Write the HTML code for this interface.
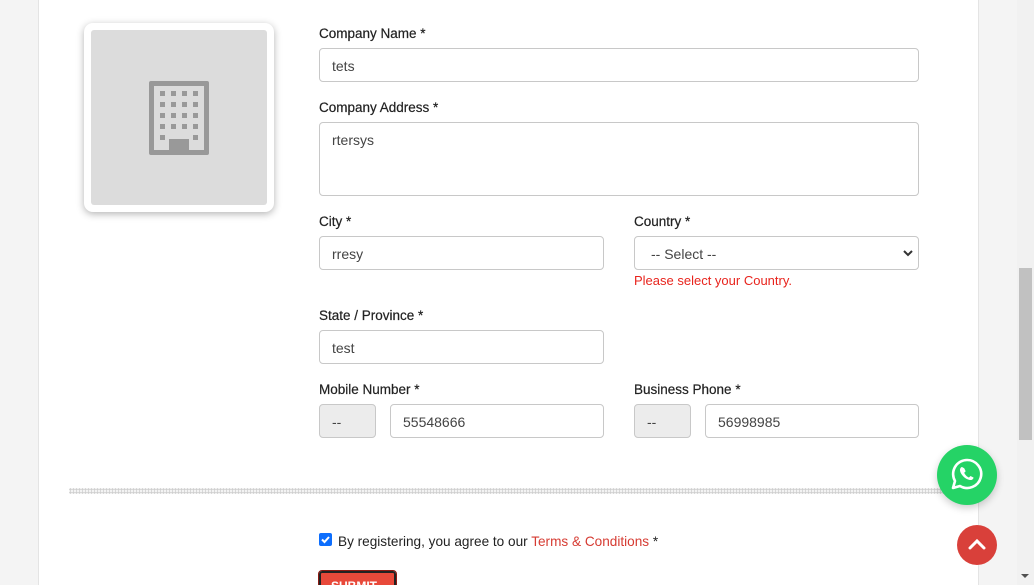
<!DOCTYPE html>
<html><head><meta charset="utf-8"><style>
*{box-sizing:border-box;margin:0;padding:0}
html,body{width:1034px;height:585px;overflow:hidden}
body{background:#f4f4f4;font-family:"Liberation Sans",sans-serif;color:#222;position:relative}
.card{position:absolute;left:38px;top:0;width:941px;height:585px;background:#fff;border-left:1px solid #e4e4e4;border-right:1px solid #e4e4e4}
.sb{position:absolute;left:1017px;top:0;width:17px;height:585px;background:#f1f1f1}
.thumb{position:absolute;left:1019px;top:268px;width:13px;height:172px;background:#c1c1c1}
.arr{position:absolute;left:1021px;top:574px;width:0;height:0;border-left:4px solid transparent;border-right:4px solid transparent;border-top:4px solid #505050}
.logo{position:absolute;left:84px;top:23px;width:190px;height:189px;background:#fff;border-radius:9px;box-shadow:0 2px 8px rgba(0,0,0,.3);padding:7px}
.logo .in{width:100%;height:100%;background:#dcdcdc;border-radius:3px;position:relative}
.a{position:absolute}
label{position:absolute;font-size:13.5px;color:#222;-webkit-text-stroke:.2px #222}
.f{position:absolute;border:1px solid #c8c8c8;border-radius:4px;background:#fff;font-size:14px;color:#444;padding:0 12px;line-height:34px}
.g{background:#ececec}
.err{position:absolute;color:#e8241d;font-size:13px}
</style></head><body>
<div class="card"></div>
<div class="sb"></div><div class="thumb"></div><div class="arr"></div>
<div class="logo"><div class="in">
<svg class="a" style="left:58px;top:50px" width="60" height="76" viewBox="0 0 60 76">
<path d="M2 1h56a2 2 0 0 1 2 2v70a2 2 0 0 1-2 2H2a2 2 0 0 1-2-2V3a2 2 0 0 1 2-2zM5 6v64h15v-11h20v11h15V6z" fill="#999" fill-rule="evenodd"/>
<g fill="#999">
<rect x="11" y="11" width="5" height="5"/><rect x="22" y="11" width="5" height="5"/><rect x="33" y="11" width="5" height="5"/><rect x="44" y="11" width="5" height="5"/>
<rect x="11" y="22" width="5" height="5"/><rect x="22" y="22" width="5" height="5"/><rect x="33" y="22" width="5" height="5"/><rect x="44" y="22" width="5" height="5"/>
<rect x="11" y="33" width="5" height="5"/><rect x="22" y="33" width="5" height="5"/><rect x="33" y="33" width="5" height="5"/><rect x="44" y="33" width="5" height="5"/>
<rect x="11" y="44" width="5" height="5"/><rect x="22" y="44" width="5" height="5"/><rect x="33" y="44" width="5" height="5"/><rect x="44" y="44" width="5" height="5"/>
<rect x="11" y="55" width="5" height="5"/><rect x="44" y="55" width="5" height="5"/></g></svg>
</div></div>

<label style="left:319px;top:26px">Company Name *</label>
<div class="f" style="left:319px;top:48px;width:600px;height:34px">tets</div>
<label style="left:319px;top:100px">Company Address *</label>
<div class="f" style="left:319px;top:122px;width:600px;height:74px;line-height:34px">rtersys</div>
<label style="left:319px;top:214px">City *</label>
<div class="f" style="left:319px;top:236px;width:285px;height:34px">rresy</div>
<label style="left:634px;top:214px">Country *</label>
<div class="f" style="left:634px;top:236px;width:285px;height:34px;padding-left:16px">-- Select --
<svg class="a" style="right:5px;top:12px" width="10" height="8" viewBox="0 0 10 8"><path d="M1 2l4 4 4-4" stroke="#333" stroke-width="2" fill="none"/></svg></div>
<div class="err" style="left:634px;top:273px">Please select your Country.</div>
<label style="left:319px;top:308px">State / Province *</label>
<div class="f" style="left:319px;top:330px;width:285px;height:34px">test</div>
<label style="left:319px;top:382px">Mobile Number *</label>
<div class="f g" style="left:319px;top:404px;width:57px;height:34px">--</div>
<div class="f" style="left:390px;top:404px;width:214px;height:34px">55548666</div>
<label style="left:634px;top:382px">Business Phone *</label>
<div class="f g" style="left:634px;top:404px;width:57px;height:34px">--</div>
<div class="f" style="left:705px;top:404px;width:214px;height:34px">56998985</div>

<div class="a" style="left:69px;top:488px;width:880px;height:6px;background-image:radial-gradient(circle,#cfcfcf 1.2px,transparent 1.4px);background-size:3px 3px"></div>

<div class="a" style="left:319px;top:533px;width:13px;height:13px;background:#0d6efd;border-radius:2px">
<svg class="a" style="left:1px;top:1px" width="11" height="11" viewBox="0 0 11 11"><path d="M2 5.5l2.5 2.5 4.5-5" stroke="#fff" stroke-width="2" fill="none"/></svg></div>
<div class="a" style="left:338px;top:534px;font-size:13.6px;color:#222">By registering, you agree to our <span style="color:#d63b32">Terms &amp; Conditions</span> *</div>

<div class="a" style="left:319px;top:571px;width:77px;height:20px;background:#e8493a;border:2px solid #222;outline:1px solid #8b1a12;border-radius:3px;color:#fff;font-size:12px;font-weight:bold;padding:6px 10px">SUBMIT</div>

<div class="a" style="left:937px;top:445px;width:60px;height:60px;border-radius:50%;background:#25d366;box-shadow:0 3px 8px rgba(0,0,0,.2)">
<svg class="a" style="left:13px;top:12px" width="34" height="34" viewBox="0 0 34 34">
<path d="M17 3a14 14 0 0 0-12 21l-2 7 7-2A14 14 0 1 0 17 3z" fill="none" stroke="#fff" stroke-width="2.6" stroke-linejoin="round"/>
<path d="M12 10c-1 0-2 1.5-2 3 0 3 4 9 10 10 2 .3 3.5-1 3.5-2.5l-3-1.5-1.5 1.5c-2-.8-4-2.8-4.8-4.8l1.5-1.5-1.5-3z" fill="#fff"/></svg></div>

<div class="a" style="left:957px;top:525px;width:40px;height:40px;border-radius:50%;background:#d9403a">
<svg class="a" style="left:11px;top:13px" width="18" height="12" viewBox="0 0 18 12"><path d="M2 10l7-7 7 7" stroke="#fff" stroke-width="3" fill="none" stroke-linecap="round"/></svg></div>
</body></html>
